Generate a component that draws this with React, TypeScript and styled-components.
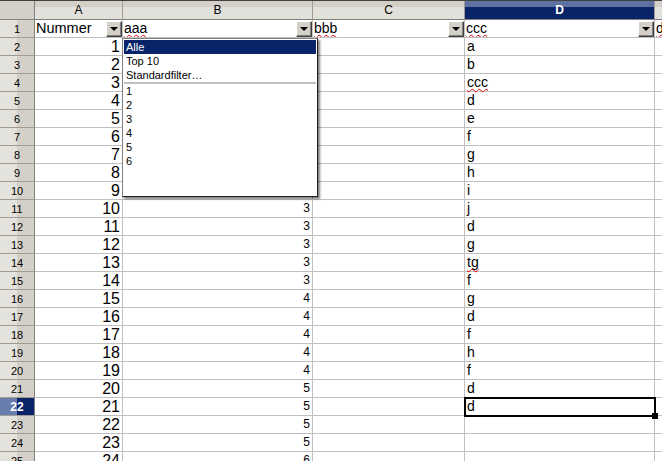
import React from 'react';
import styled, { createGlobalStyle, css } from 'styled-components';

const GlobalStyle = createGlobalStyle`
  html, body {
    margin: 0;
    padding: 0;
    background: #ffffff;
    overflow: hidden;
  }
  body {
    font-family: "Liberation Sans", Arial, sans-serif;
    color: #000;
  }
`;

const Sheet = styled.div`
  position: relative;
  display: grid;
  grid-template-columns: 35px 88px 190px 152px 190px 80px;
  grid-template-rows: 19px;
  grid-auto-rows: 18px;
  width: 735px;
  border-top: 1px solid #404040;
`;

const headerBase = css`
  box-sizing: border-box;
  font-size: 11px;
  display: flex;
  align-items: center;
  justify-content: center;
`;

const Corner = styled.div`
  ${headerBase};
  background: #d4d0c8;
  border-right: 1px solid #808080;
  border-bottom: 1px solid #808080;
`;

const ColHeader = styled.div<{ $selected?: boolean }>`
  ${headerBase};
  font-size: 12px;
  border-right: 1px solid #a09c94;
  border-bottom: 1px solid #808080;
  background: ${(p) =>
    p.$selected
      ? 'linear-gradient(#5d71a3 0 6px, #0a246a 6px)'
      : 'linear-gradient(#d4d0c8 0 6px, #e2e0da 6px)'};
  color: ${(p) => (p.$selected ? '#ffffff' : '#000')};
  font-weight: ${(p) => (p.$selected ? 700 : 400)};
`;

const RowHeader = styled.div<{ $selected?: boolean }>`
  ${headerBase};
  border-right: 1px solid #808080;
  border-bottom: 1px solid #a09c94;
  background: ${(p) =>
    p.$selected
      ? 'linear-gradient(90deg, #6a7eae 0 17px, #0a246a 17px)'
      : 'linear-gradient(90deg, #e4e2dc 0 17px, #d4d0c8 17px)'};
  color: ${(p) => (p.$selected ? '#ffffff' : '#000')};
  font-weight: ${(p) => (p.$selected ? 700 : 400)};
  font-size: ${(p) => (p.$selected ? '12px' : '11px')};
`;

const Cell = styled.div<{ $align?: 'left' | 'right'; $size?: number; $cursor?: boolean }>`
  position: relative;
  box-sizing: border-box;
  border-right: 1px solid #c0c0c0;
  border-bottom: 1px solid #c0c0c0;
  display: flex;
  align-items: flex-end;
  justify-content: ${(p) => (p.$align === 'right' ? 'flex-end' : 'flex-start')};
  padding: 0 ${(p) => (p.$align === 'right' ? '2px' : '0')} 0 ${(p) => (p.$align === 'right' ? '0' : '2px')};
  font-size: ${(p) => p.$size ?? 13}px;
  line-height: 17px;
  white-space: nowrap;
  overflow: visible;

  ${(p) =>
    p.$cursor &&
    css`
      z-index: 1;
      &::after {
        content: '';
        position: absolute;
        top: -1px;
        left: -1px;
        right: -2px;
        bottom: -2px;
        border: 2px solid #000;
      }
      &::before {
        content: '';
        position: absolute;
        right: -4px;
        bottom: -4px;
        width: 6px;
        height: 6px;
        background: #000;
        z-index: 2;
      }
    `}
`;

const TitleCell = styled.div`
  box-sizing: border-box;
  border-right: 1px solid #c0c0c0;
  border-bottom: 1px solid #c0c0c0;
  display: flex;
  align-items: flex-start;
  padding-left: 1px;
  overflow: hidden;
  white-space: nowrap;
`;

const TitleText = styled.span<{ $size?: number }>`
  flex: 1;
  font-size: ${(p) => p.$size ?? 14}px;
  line-height: 17px;
  overflow: hidden;
`;

const Wavy = styled.span`
  text-decoration-line: underline;
  text-decoration-style: wavy;
  text-decoration-color: #e00000;
  text-decoration-thickness: 1px;
  text-decoration-skip-ink: none;
  text-underline-offset: 1px;
`;

const FilterButton = styled.div`
  box-sizing: border-box;
  flex: none;
  width: 16px;
  height: 16px;
  margin-top: 1px;
  background: #d4d0c8;
  border: 1px solid;
  border-color: #ffffff #404040 #404040 #ffffff;
  box-shadow: inset -1px -1px 0 #808080;
  display: flex;
  align-items: center;
  justify-content: center;

  &::after {
    content: '';
    width: 0;
    height: 0;
    border-left: 4px solid transparent;
    border-right: 4px solid transparent;
    border-top: 4px solid #000;
    margin: 0 1px 1px 0;
  }
`;

const Popup = styled.div`
  position: absolute;
  left: 122px;
  top: 37px;
  width: 196px;
  height: 159px;
  box-sizing: border-box;
  background: #ffffff;
  border: 1px solid #808080;
  border-right-color: #202020;
  border-bottom-color: #202020;
  box-shadow: 2px 2px 2px rgba(0, 0, 0, 0.5);
  padding: 1px;
  z-index: 3;
  font-size: 11px;
  display: flex;
  flex-direction: column;
`;

const PopupItem = styled.div<{ $active?: boolean }>`
  height: 14px;
  line-height: 14px;
  padding-left: 2px;
  background: ${(p) => (p.$active ? '#0a246a' : 'transparent')};
  color: ${(p) => (p.$active ? '#ffffff' : '#000')};
`;

const PopupSeparator = styled.div`
  height: 2px;
  margin: 0 0 0;
  background: #c0c0c0;
`;

type Row = { a: number; b: number; d: string; dWavy?: boolean };

const rows: Row[] = [
  { a: 1, b: 1, d: 'a' },
  { a: 2, b: 1, d: 'b' },
  { a: 3, b: 1, d: 'ccc', dWavy: true },
  { a: 4, b: 1, d: 'd' },
  { a: 5, b: 2, d: 'e' },
  { a: 6, b: 2, d: 'f' },
  { a: 7, b: 2, d: 'g' },
  { a: 8, b: 2, d: 'h' },
  { a: 9, b: 2, d: 'i' },
  { a: 10, b: 3, d: 'j' },
  { a: 11, b: 3, d: 'd' },
  { a: 12, b: 3, d: 'g' },
  { a: 13, b: 3, d: 'tg', dWavy: true },
  { a: 14, b: 3, d: 'f' },
  { a: 15, b: 4, d: 'g' },
  { a: 16, b: 4, d: 'd' },
  { a: 17, b: 4, d: 'f' },
  { a: 18, b: 4, d: 'h' },
  { a: 19, b: 4, d: 'f' },
  { a: 20, b: 5, d: 'd' },
  { a: 21, b: 5, d: 'd' },
  { a: 22, b: 5, d: '' },
  { a: 23, b: 5, d: '' },
  { a: 24, b: 6, d: '' },
];

const filterOptions = ['1', '2', '3', '4', '5', '6'];

export default function App() {
  return (
    <>
      <GlobalStyle />
      <Sheet>
        <Corner />
        <ColHeader>A</ColHeader>
        <ColHeader>B</ColHeader>
        <ColHeader>C</ColHeader>
        <ColHeader $selected>D</ColHeader>
        <ColHeader>E</ColHeader>

        <RowHeader>1</RowHeader>
        <TitleCell>
          <TitleText $size={14.5}>Nummer</TitleText>
          <FilterButton />
        </TitleCell>
        <TitleCell>
          <TitleText>
            <Wavy>aaa</Wavy>
          </TitleText>
          <FilterButton />
        </TitleCell>
        <TitleCell>
          <TitleText>
            <Wavy>bbb</Wavy>
          </TitleText>
          <FilterButton />
        </TitleCell>
        <TitleCell>
          <TitleText>
            <Wavy>ccc</Wavy>
          </TitleText>
          <FilterButton />
        </TitleCell>
        <TitleCell>
          <TitleText>
            <Wavy>ddd</Wavy>
          </TitleText>
        </TitleCell>

        {rows.map((r, i) => {
          const n = i + 2;
          const current = n === 22;
          return (
            <React.Fragment key={n}>
              <RowHeader $selected={current}>{n}</RowHeader>
              <Cell $align="right" $size={16}>
                {r.a}
              </Cell>
              <Cell $align="right" $size={12}>
                {r.b}
              </Cell>
              <Cell />
              <Cell $size={14} $cursor={current}>
                {r.dWavy ? <Wavy>{r.d}</Wavy> : r.d}
              </Cell>
              <Cell />
            </React.Fragment>
          );
        })}

        <Popup>
          <PopupItem $active>Alle</PopupItem>
          <PopupItem>Top 10</PopupItem>
          <PopupItem>Standardfilter…</PopupItem>
          <PopupSeparator />
          {filterOptions.map((o) => (
            <PopupItem key={o}>{o}</PopupItem>
          ))}
        </Popup>
      </Sheet>
    </>
  );
}
